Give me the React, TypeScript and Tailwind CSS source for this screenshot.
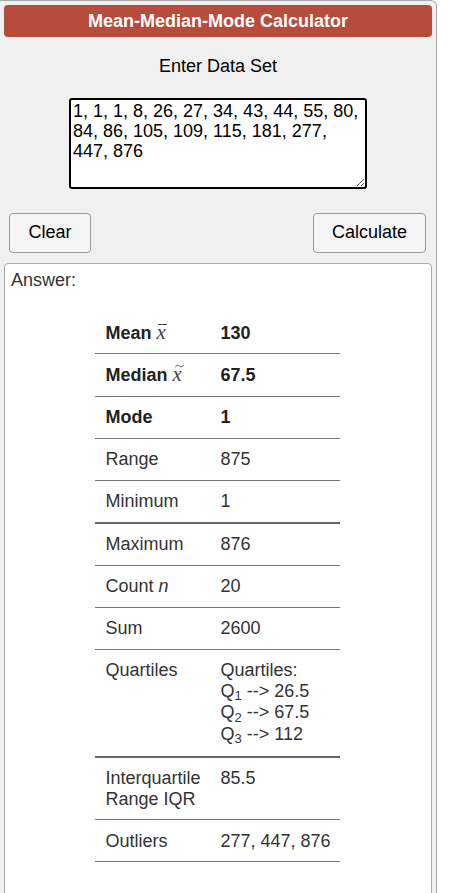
import React from 'react';

const font = { fontFamily: '"Liberation Sans", Arial, sans-serif' };
const serif = { fontFamily: '"Liberation Serif", "Times New Roman", serif' };

interface Row {
  label: React.ReactNode;
  value: React.ReactNode;
  bold?: boolean;
  thick?: boolean;
}

// italic x with a bar or tilde over it, like the MathJax output
const MathX: React.FC<{ accent: 'bar' | 'tilde' }> = ({ accent }) => (
  <span className="relative inline-block font-normal italic text-[#444] text-[21px] leading-[18px]" style={serif}>
    x
    {accent === 'bar' ? (
      <span className="absolute left-[1px] right-[-1px] top-[1px] h-[1px] bg-[#444]" />
    ) : (
      <svg className="absolute left-[2px] top-[-1px]" width="9" height="4" viewBox="0 0 9 4">
        <path d="M0.5 3.2 C1.5 0.8 3 0.8 4.5 2 C6 3.2 7.5 3.2 8.5 0.8" fill="none" stroke="#444" strokeWidth="1" />
      </svg>
    )}
  </span>
);

const rows: Row[] = [
  { label: <>Mean <MathX accent="bar" /></>, value: '130', bold: true },
  { label: <>Median <MathX accent="tilde" /></>, value: '67.5', bold: true },
  { label: 'Mode', value: '1', bold: true },
  { label: 'Range', value: '875' },
  { label: 'Minimum', value: '1', thick: true },
  { label: 'Maximum', value: '876' },
  { label: <>Count <i>n</i></>, value: '20' },
  { label: 'Sum', value: '2600' },
  {
    label: 'Quartiles',
    value: (
      <>
        <div>Quartiles:</div>
        {[['1', '26.5'], ['2', '67.5'], ['3', '112']].map(([k, v]) => (
          <div key={k} className="leading-[21.5px]">
            Q<sub className="text-[13px]">{k}</sub> --&gt; {v}
          </div>
        ))}
      </>
    ),
    thick: true,
  },
  { label: 'Interquartile Range IQR', value: '85.5' },
  { label: 'Outliers', value: '277, 447, 876' },
];

export default function App() {
  return (
    <div style={font} className="w-[437px] min-h-screen bg-[#f0f0f0] border-t border-r border-[#aaa] rounded-tr-[6px] pt-[4px] pl-[4px] pr-[4px]">
      <div className="h-[32px] rounded-[4px] bg-[#b84c3c] flex items-center justify-center text-white font-bold text-[18px]">
        Mean-Median-Mode Calculator
      </div>

      <div className="mt-[19px] text-center text-[18px] leading-[20.7px] text-black">Enter Data Set</div>

      <div className="mt-[21px] flex justify-center">
        <textarea
          defaultValue="1, 1, 1, 8, 26, 27, 34, 43, 44, 55, 80, 84, 86, 105, 109, 115, 181, 277, 447, 876"
          style={font}
          className="w-[298px] h-[91px] border-2 border-black rounded-[3px] bg-white px-[2px] pt-[1px] text-[18px] leading-[20px] text-black outline-none"
        />
      </div>

      <div className="mt-[24px] flex justify-between pl-[5px] pr-[6px]">
        <button className="w-[82px] h-[40px] rounded-[4px] border border-[#999] bg-[#f5f5f5] text-[18px] text-black">Clear</button>
        <button className="w-[113px] h-[40px] rounded-[4px] border border-[#999] bg-[#f5f5f5] text-[18px] text-black">Calculate</button>
      </div>

      <div className="mt-[10px] bg-white border border-[#aaa] rounded-[4px] pt-[6px] pl-[6px] pb-[60px]">
        <div className="text-[18px] leading-[20.7px] text-[#333]">Answer:</div>

        <div className="mt-[22px] w-[245px] mx-auto -translate-x-[4px]">
          {rows.map((r, i) => (
            <div
              key={i}
              className={`flex text-[18px] leading-[20.7px] ${r.bold ? 'font-bold text-[#222]' : 'text-[#333]'} ${r.thick ? 'border-b-2 border-[#666]' : 'border-b border-[#777]'}`}
            >
              <div className="w-[115px] pl-[11px] py-[10.2px]">{r.label}</div>
              <div className="flex-1 pl-[11px] py-[10.2px]">{r.value}</div>
            </div>
          ))}
        </div>
      </div>
    </div>
  );
}
